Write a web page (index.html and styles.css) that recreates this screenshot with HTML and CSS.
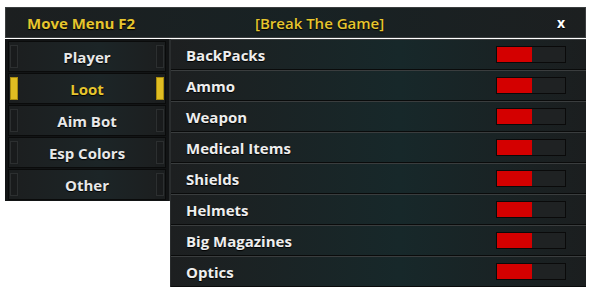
FILE: index.html
```html
<!DOCTYPE html>
<html lang="en">
<head>
<meta charset="UTF-8">
<meta name="viewport" content="width=device-width, initial-scale=1.0">
<title>Move Menu</title>
<link rel="stylesheet" href="styles.css">
</head>
<body>

<div class="menu">
    <div class="header">
        <span class="title">Move Menu F2</span>
        <span class="game">[Break The Game]</span>
        <span class="close">x</span>
    </div>

    <div class="content">
        <div class="sidebar">
            <div class="tab"><span class="mark"></span><span class="tab-name">Player</span><span class="mark"></span></div>
            <div class="tab active"><span class="mark"></span><span class="tab-name">Loot</span><span class="mark"></span></div>
            <div class="tab"><span class="mark"></span><span class="tab-name">Aim Bot</span><span class="mark"></span></div>
            <div class="tab"><span class="mark"></span><span class="tab-name">Esp Colors</span><span class="mark"></span></div>
            <div class="tab"><span class="mark"></span><span class="tab-name">Other</span><span class="mark"></span></div>
        </div>

        <div class="list">
            <div class="row"><span>BackPacks</span><div class="toggle"><div class="fill"></div></div></div>
            <div class="row"><span>Ammo</span><div class="toggle"><div class="fill"></div></div></div>
            <div class="row"><span>Weapon</span><div class="toggle"><div class="fill"></div></div></div>
            <div class="row"><span>Medical Items</span><div class="toggle"><div class="fill"></div></div></div>
            <div class="row"><span>Shields</span><div class="toggle"><div class="fill"></div></div></div>
            <div class="row"><span>Helmets</span><div class="toggle"><div class="fill"></div></div></div>
            <div class="row"><span>Big Magazines</span><div class="toggle"><div class="fill"></div></div></div>
            <div class="row"><span>Optics</span><div class="toggle"><div class="fill"></div></div></div>
        </div>
    </div>
</div>

</body>
</html>
```

FILE: styles.css
```css
body {
    font-family: "Open Sans", "DejaVu Sans", sans-serif;
    background: #fff;
    color: #eee;
    margin: 0;
    padding: 7px 0 0 5px;
}

.menu {
    width: 581px;
}

.header {
    height: 31px;
    box-sizing: border-box;
    background: linear-gradient(90deg, #1c1f20 0%, #182224 50%, #1c1f20 100%);
    border: 1px solid #3a3d3e;
    display: flex;
    align-items: center;
    padding: 0 20px 0 21px;
    font-weight: 700;
    font-size: 15px;
    text-shadow: 0 1px 1px #000;
}

.title {
    color: #e6c52e;
    width: 228px;
}

.game {
    color: #e6c52e;
    font-weight: 600;
    flex: 1;
}

.close {
    color: #fff;
    font-size: 14px;
}

.content {
    display: flex;
    align-items: flex-start;
    margin-top: 1px;
}

.sidebar {
    width: 165px;
    box-sizing: border-box;
    background: #121415;
    padding: 2px 3px 1px 3px;
    display: flex;
    flex-direction: column;
    gap: 1px;
    border-right: 1px solid #2a2d2e;
}

.tab {
    height: 31px;
    box-sizing: border-box;
    display: flex;
    align-items: stretch;
    background: #1b1e1f;
    border: 1px solid #0a0b0b;
}

.mark {
    width: 6px;
    margin: 3px 1px;
    background: #191b1c;
    border: 1px solid #2c2f30;
}

.tab-name {
    flex: 1;
    display: flex;
    align-items: center;
    justify-content: center;
    font-weight: 700;
    font-size: 15px;
    color: #e8e8e8;
    text-shadow: 0 1px 1px #000;
    background: linear-gradient(90deg, #1c1f20, #1c2527 60%, #1c1f20);
}

.tab.active .mark {
    background: #e0bd22;
    border-color: #a88b10;
}

.tab.active .tab-name {
    color: #e6c52e;
}

.list {
    flex: 1;
    background: #101213;
    border-left: 1px solid #2a2d2e;
}

.row {
    height: 29px;
    display: flex;
    align-items: center;
    justify-content: space-between;
    padding: 0 20px 0 15px;
    border-top: 1px solid #3a3d3e;
    border-bottom: 1px solid #0a0b0b;
    background: linear-gradient(90deg, #1d1f20 0%, #17282a 55%, #1b1e1f 100%);
    font-weight: 700;
    font-size: 15px;
    color: #eee;
    text-shadow: 0 1px 1px #000;
}

.toggle {
    width: 70px;
    height: 17px;
    box-sizing: border-box;
    border: 1px solid #0a0a0a;
    background: #1f2223;
}

.fill {
    width: 35px;
    height: 100%;
    background: #d40000;
}
```
